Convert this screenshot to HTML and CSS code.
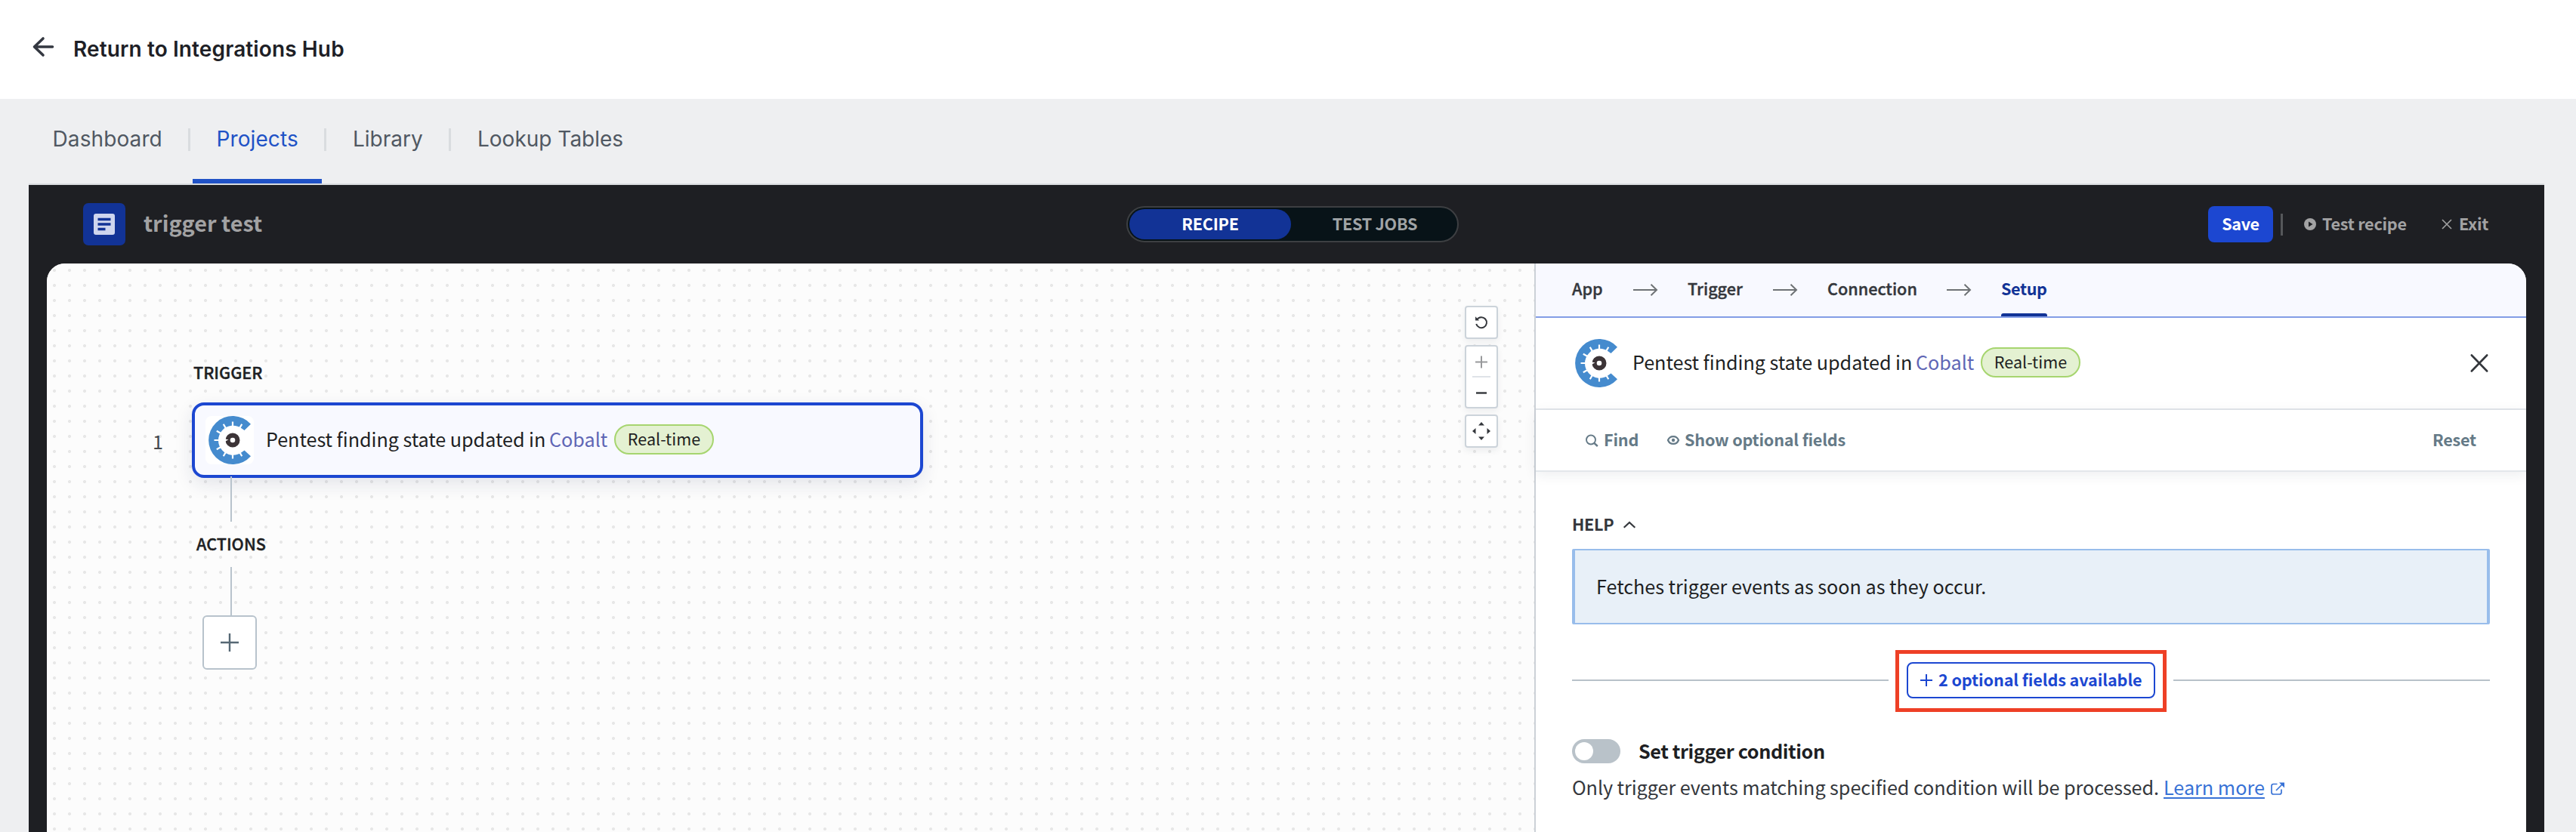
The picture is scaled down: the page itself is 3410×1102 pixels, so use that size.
FILE: index.html
```
<!DOCTYPE html>
<html lang="en">
<head>
<meta charset="utf-8">
<title>trigger test</title>
<link rel="stylesheet" href="styles.css">
</head>
<body>
<svg class="defs" width="0" height="0">
  <symbol id="cobalt" viewBox="0 0 64 64">
    <path d="M60 10.700A32 32 0 1 0 60 53.300L51.500 45.500L48 48A19.500 19.500 0 1 1 48 16.500L51.500 19Z" fill="#458bce"/>
    <path d="M36 14V7.500M36 50V56.500M18 32H11.500M27 16.400L23.750 10.800M45 16.400L48.250 10.800M27 47.600L23.750 53.200M45 47.600L48.250 53.200M20.400 23L14.800 19.750M20.400 41L14.800 44.250" stroke="#fff" stroke-width="2.200"/>
    <circle cx="36" cy="32" r="6.400" fill="none" stroke="#3c3437" stroke-width="6.200"/>
    <path d="M25.500 30.500L30.500 31.200L25.500 34Z" fill="#fff"/>
  </symbol>
</svg>
<header class="return-bar">
  <svg class="back" width="28" height="26" viewBox="0 0 28 26"><path d="M14 2L2.500 13L14 24M3 13H26.500" fill="none" stroke="#343841" stroke-width="3.600" stroke-linecap="round" stroke-linejoin="round"/></svg>
  <span class="return-title">Return to Integrations Hub</span>
</header>
<nav class="main-nav">
  <a class="tab w-dash">Dashboard</a>
  <a class="tab active w-proj">Projects</a>
  <a class="tab w-lib">Library</a>
  <a class="tab w-look">Lookup Tables</a>
</nav>
<main class="shell">
  <div class="topbar">
    <div class="recipe-name">
      <span class="doc"><svg width="28" height="28" viewBox="0 0 28 28"><rect width="28" height="28" rx="3" fill="#cfd6ee"/><path d="M5.500 7.500H22.500M5.500 14H22.500M5.500 20.500H15.500" stroke="#123396" stroke-width="3.400"/></svg></span>
      <span class="name">trigger test</span>
    </div>
    <div class="switcher"><span class="seg on">RECIPE</span><span class="seg off">TEST JOBS</span></div>
    <div class="top-actions">
      <button class="save">Save</button>
      <span class="bar"></span>
      <span class="act test"><svg width="16" height="16" viewBox="0 0 16 16"><circle cx="8" cy="8" r="8" fill="#a2a2a3"/><path d="M6 4.500L11.500 8L6 11.500Z" fill="#1e1f23"/></svg><span>Test recipe</span></span>
      <span class="act exit"><svg width="14" height="14" viewBox="0 0 14 14"><path d="M1 1L13 13M13 1L1 13" stroke="#a2a2a3" stroke-width="1.600"/></svg><span>Exit</span></span>
    </div>
  </div>
  <div class="workspace">
    <section class="canvas">
      <div class="flow">
        <h2 class="label">TRIGGER</h2>
        <div class="step">
          <span class="num">1</span>
          <div class="card">
            <svg class="logo" width="64" height="64"><use href="#cobalt"/></svg>
            <span class="sentence">Pentest finding state updated in</span><span class="app">Cobalt</span><span class="badge">Real-time</span>
          </div>
        </div>
        <i class="wire one"></i>
        <h2 class="label actions">ACTIONS</h2>
        <i class="wire two"></i>
        <div class="add"><svg width="24" height="24" viewBox="0 0 24 24"><path d="M0 12H24M12 0V24" stroke="#566874" stroke-width="2.400"/></svg></div>
      </div>
      <div class="tools">
        <div class="tool"><svg width="18" height="18" viewBox="0 0 18 18"><path d="M3.200 5.200A7 7 0 1 1 2.200 11" fill="none" stroke="#34373c" stroke-width="2"/><path d="M1 1.200V6.500H6Z" fill="#34373c"/></svg></div>
        <div class="tool tall">
          <svg width="16" height="16" viewBox="0 0 16 16"><path d="M0 8.500H16M8 0.500V16.500" stroke="#98999b" stroke-width="2"/></svg>
          <i></i>
          <svg width="14" height="16" viewBox="0 0 14 16"><path d="M0 8.500H14" stroke="#34373c" stroke-width="2.400"/></svg>
        </div>
        <div class="tool"><svg width="24" height="24" viewBox="0 0 24 24"><path d="M12 0L16 4.500H8ZM12 24L8 19.500H16ZM0 12L4.500 8V16ZM24 12L19.500 16V8Z" fill="#34373c"/></svg></div>
      </div>
    </section>
    <aside class="panel">
      <div class="steps">
        <span class="st s1">App</span><svg class="arr" width="32" height="16" viewBox="0 0 32 16"><path d="M0 8H31M23.500 0.700L31 8L23.500 15.300" fill="none" stroke="#6e7275" stroke-width="2"/></svg>
        <span class="st s2">Trigger</span><svg class="arr" width="32" height="16" viewBox="0 0 32 16"><path d="M0 8H31M23.500 0.700L31 8L23.500 15.300" fill="none" stroke="#6e7275" stroke-width="2"/></svg>
        <span class="st s3">Connection</span><svg class="arr" width="32" height="16" viewBox="0 0 32 16"><path d="M0 8H31M23.500 0.700L31 8L23.500 15.300" fill="none" stroke="#6e7275" stroke-width="2"/></svg>
        <span class="st s4">Setup</span>
      </div>
      <div class="summary">
        <svg class="logo" width="64" height="64"><use href="#cobalt"/></svg>
        <span class="sentence">Pentest finding state updated in</span><span class="app">Cobalt</span><span class="badge">Real-time</span>
        <svg class="close" width="24" height="24" viewBox="0 0 24 24"><path d="M1.800 1.500L22.200 22.500M22.200 1.500L1.800 22.500" stroke="#34373c" stroke-width="2.600" stroke-linecap="round"/></svg>
      </div>
      <div class="filters">
        <span class="find"><svg width="17" height="17" viewBox="0 0 17 17"><circle cx="7" cy="7.500" r="6" fill="none" stroke="#657a87" stroke-width="1.900"/><path d="M11.300 11.800L15.800 16" stroke="#657a87" stroke-width="2.400"/></svg><span>Find</span></span>
        <span class="show"><svg width="16" height="12" viewBox="0 0 16 12"><path d="M1 6C3.500 -0.500 12.500 -0.500 15 6C12.500 12.500 3.500 12.500 1 6Z" fill="none" stroke="#657a87" stroke-width="2.200"/><circle cx="8" cy="6" r="2.200" fill="#657a87"/></svg><span>Show optional fields</span></span>
        <span class="reset">Reset</span>
      </div>
      <div class="body">
        <div class="help-title"><span>HELP</span><svg width="16" height="10" viewBox="0 0 16 10"><path d="M0.700 8.700L8 2L15.300 8.700" fill="none" stroke="#34373c" stroke-width="2.200"/></svg></div>
        <div class="help-box"><span>Fetches trigger events as soon as they occur.</span></div>
        <div class="optional">
          <i></i>
          <div class="mark"><button class="more"><svg width="16" height="16" viewBox="0 0 16 16"><path d="M0 8H16M8 0V16" stroke="#1c47d1" stroke-width="2"/></svg><span>2 optional fields available</span></button></div>
          <i></i>
        </div>
        <div class="condition"><span class="toggle"><b></b></span><span class="cond">Set trigger condition</span></div>
        <p class="desc"><span class="d1">Only trigger events matching specified condition will be processed.</span><a class="learn">Learn more</a><svg width="18" height="17" viewBox="0 0 18 17"><path d="M8.500 2.500H3.500Q1 2.500 1 5V13.500Q1 16 3.500 16H11.500Q14 16 14 13.500V9.500M7 11L15 3" fill="none" stroke="#3872d6" stroke-width="1.700"/><path d="M11 0.500H18V7.500Z" fill="#3872d6"/></svg></p>
      </div>
    </aside>
  </div>
</main>
</body>
</html>
```
FILE: styles.css
```
* { box-sizing: border-box; }
body { margin: 0; height: 1102px; overflow: hidden; background: #eeeff1; display: flex; flex-direction: column; font-family: "Noto Sans CJK SC", "Noto Sans", sans-serif; font-size: 21.6px; line-height: 32px; color: #1e1f23; white-space: nowrap; }
.defs { display: none; }
svg { display: block; flex: none; overflow: visible; }
button { font: inherit; margin: 0; }

/* return header and main tabs */
.return-bar { height: 131px; background: #fff; padding: 0 43px; display: flex; align-items: center; flex: none; }
.back { margin-top: -7px; }
.return-title { font: 600 28px/34px Inter, sans-serif; letter-spacing: .12px; color: #1e1f26; margin-left: 26px; padding-bottom: 2px; }
.main-nav { height: 114px; flex: none; margin: 0 42px 0 38px; border-bottom: 2px solid #d9dcdf; display: flex; }
.tab { font: 400 28px/34px Inter, sans-serif; color: #505862; padding: 36px 0 0 33.5px; position: relative; }
.tab + .tab::before { content: ""; position: absolute; left: -4px; top: 39px; width: 3px; height: 30px; background: #d9dcdf; }
.w-dash { width: 215px; padding-left: 31.5px; letter-spacing: .1px; }
.w-proj { width: 180px; letter-spacing: .1px; }
.w-lib { width: 165px; padding-left: 34px; }
.w-look { padding-left: 34px; }
.tab.active { color: #2052c6; }
.active::after { content: ""; position: absolute; left: 2px; bottom: 0; width: 171px; height: 6px; background: #2052c6; }

/* recipe top bar */
.shell { flex: 1; min-height: 0; margin: 0 42px 0 38px; background: #1e1f23; padding: 0 24px; display: flex; flex-direction: column; }
.topbar { height: 104px; flex: none; display: grid; grid-template-columns: 1429px 440px 1fr; align-items: center; font-weight: 700; letter-spacing: -.25px; }
.recipe-name { display: flex; align-items: center; padding-left: 48px; }
.doc { width: 56px; height: 56px; border-radius: 7px; background: #123396; display: grid; place-items: center; }
.name { font-size: 28.8px; letter-spacing: 0; color: #a2a2a3; margin-left: 24px; padding-bottom: 4px; }
.switcher { height: 48px; border: 2px solid #3d3f42; border-radius: 24px; background: #081318; padding: 2px; display: flex; }
.seg { width: 214px; text-align: center; line-height: 38px; color: #a0a4a6; }
.seg.on { background: #123396; color: #fff; border-radius: 20px; }
.seg.off { width: 218px; padding-left: 4px; }
.top-actions { display: flex; align-items: center; padding-left: 992px; color: #a2a2a3; }
.save { width: 86px; height: 48px; border: 0; border-radius: 8px; background: #1c47d1; color: #fff; padding: 0 0 2px; letter-spacing: -.4px; }
.bar { width: 3px; height: 29px; background: #55575a; margin-left: 10px; }
.act { display: flex; align-items: center; }
.act span { padding-bottom: 2px; }
.test { gap: 8px; margin-left: 28px; width: 182px; }
.exit { gap: 9px; }

/* recipe canvas */
.workspace { flex: 1; min-height: 0; display: flex; border-radius: 24px 24px 0 0; overflow: hidden; background: #fff; }
.canvas { width: 1971px; flex: none; border-right: 2px solid #ccd1d7; background: radial-gradient(circle at 10px 9px, #e7e7e7 1.8px, transparent 2.3px) 0 0 / 20px 20px #fcfcfc; display: flex; }
.flow { width: 1877px; padding-top: 129px; }
.label { margin: 0 0 0 194px; font-size: 21.6px; line-height: 29px; padding-bottom: 3px; font-weight: 500; -webkit-text-stroke: .4px currentColor; }
.step { display: flex; align-items: center; margin-top: 23px; padding-left: 140px; }
.num { width: 52px; padding-top: 1px; font-size: 25.2px; color: #44474c; }
.card { width: 968px; height: 100px; border: 4px solid #1c47d1; border-radius: 16px; background: #f8f9ff; box-shadow: 0 8px 24px rgba(30,40,80,.11); display: flex; align-items: center; padding-left: 14px; }
.card .logo { background: #fff; border-radius: 8px; }
.sentence, .app { font-size: 25.2px; padding-bottom: 4px; }
.sentence { margin-left: 16px; width: 375px; letter-spacing: -.05px; }
.app { color: #5f66b5; width: 86px; }
.badge { width: 132px; height: 40px; margin-bottom: 2px; border: 2px solid #a6d56f; border-radius: 20px; background: #e4f1d2; text-align: center; line-height: 33px; }
.wire { display: block; width: 2px; background: #b8c3cc; margin-left: 243px; }
.one { height: 60px; margin-top: -2px; position: relative; }
.actions { margin: 14px 0 0 198px; }
.two { height: 64px; margin-top: 14px; }
.add { width: 72px; height: 72px; border: 2px solid #b8c3cc; border-radius: 6px; background: #fff; margin-left: 206px; display: grid; place-items: center; }
.tools { padding-top: 56px; display: flex; flex-direction: column; gap: 8px; }
.tool { width: 44px; height: 44px; border: 2px solid #ccd3da; border-radius: 4px; background: #fff; box-shadow: 0 4px 8px rgba(30,40,60,.07); display: grid; place-items: center; }
.tall { height: 84px; grid-template-rows: 39px 2px 39px; }
.tall i { width: 24px; height: 2px; background: #dfe3e8; }

/* setup panel */
.panel { flex: 1; min-width: 0; }
.steps { height: 72px; background: #f8f9ff; border-bottom: 2px solid #839de6; display: flex; align-items: center; padding-left: 48px; font-weight: 500; color: #34373c; }
.st { padding-bottom: 4px; -webkit-text-stroke: .4px currentColor; }
.s1 { width: 81px; }
.s2 { width: 113px; margin-left: 40px; }
.s3 { width: 158px; margin-left: 40px; }
.s4 { margin-left: 40px; width: 61px; height: 70px; line-height: 66px; color: #123396; position: relative; font-weight: 700; letter-spacing: -.4px; -webkit-text-stroke: 0; }
.s4::after { content: ""; position: absolute; left: 0; bottom: 0; width: 61px; height: 4px; border-radius: 3px 3px 0 0; background: #123396; }
.summary { height: 122px; border-bottom: 2px solid #e3e7eb; display: flex; align-items: center; padding: 0 50px 0 48px; }
.close { margin-left: auto; }
.filters { height: 82px; border-bottom: 2px solid #e3e7eb; display: flex; align-items: center; padding: 0 66px; font-weight: 700; letter-spacing: -.2px; color: #657a87; box-shadow: 0 4px 16px rgba(30,40,60,.08); }
.find, .show { display: flex; align-items: center; gap: 7px; }
.find span, .show span, .reset { padding-bottom: 2px; }
.find { width: 108px; }
.reset { margin-left: auto; }
.body { padding: 54px 48px 0 48px; }
.help-title { display: flex; align-items: center; gap: 13px; font-weight: 700; letter-spacing: -.3px; color: #34373c; }
.help-title span { line-height: 30px; padding-bottom: 2px; }
.help-box { margin-top: 16px; height: 100px; border: 2px solid #98bdeb; border-width: 2px 4px; border-radius: 2px; background: #e8f0f8; font-size: 25.2px; letter-spacing: -.03px; line-height: 94px; padding-left: 28px; }
.optional { display: flex; align-items: center; margin-top: 34px; }
.optional i { flex: 1; height: 2px; margin-bottom: 2px; background: #b8c1c9; }
.mark { width: 359px; height: 82px; border: 5px solid #ee4026; margin: 0 9px; padding-bottom: 2px; display: grid; place-items: center; }
.more { width: 329px; height: 48px; border: 2px solid #1c47d1; border-radius: 8px; background: #fff; color: #1c47d1; font-weight: 700; letter-spacing: -.1px; padding: 0 0 0 16px; display: flex; align-items: center; gap: 8px; }
.more span { padding-bottom: 2px; }
.condition { display: flex; align-items: center; margin-top: 36px; height: 32px; }
.toggle { width: 64px; height: 32px; border-radius: 16px; background: #b9c2c9; padding: 4px; }
.toggle b { display: block; width: 24px; height: 24px; border-radius: 50%; background: #fff; }
.cond { margin-left: 24px; padding-bottom: 2px; font-weight: 700; font-size: 25.2px; letter-spacing: -.4px; }
.desc { margin: 15px 0 0; display: flex; align-items: center; font-size: 25.2px; color: #34373c; }
.d1 { width: 783px; letter-spacing: -.07px; }
.learn { color: #3872d6; text-decoration: underline; text-decoration-skip-ink: none; width: 142px; text-underline-offset: 3px; text-decoration-thickness: 2px; }
.desc svg { margin-top: 4px; }
```
